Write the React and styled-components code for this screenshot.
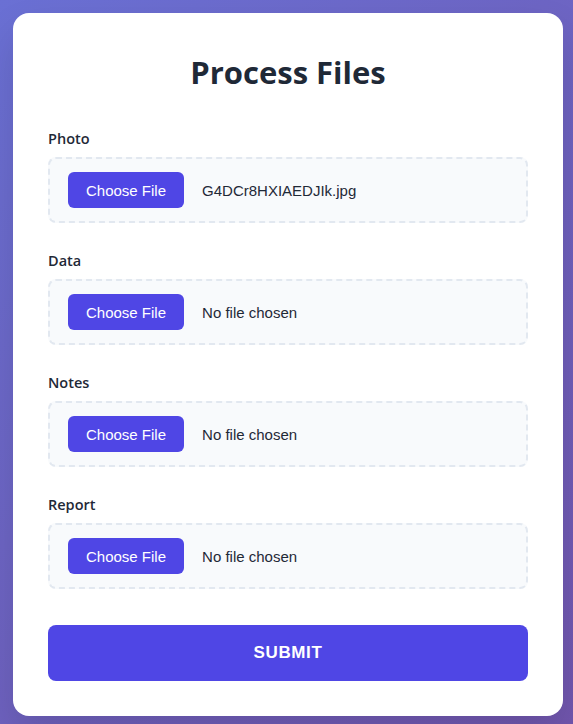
import React from "react";
import styled, { createGlobalStyle } from "styled-components";

const GlobalStyle = createGlobalStyle`
  * { box-sizing: border-box; }
  html, body { margin: 0; padding: 0; }
  body {
    min-height: 100vh;
    background: linear-gradient(135deg, #6a70d4 0%, #7156ae 100%);
    font-family: "Open Sans", "Noto Sans", sans-serif;
  }
`;

const Page = styled.div`
  padding: 13px 10px 8px 13px;
`;

const Card = styled.div`
  background: #ffffff;
  border-radius: 16px;
  padding: 35px;
  box-shadow: 0 20px 40px rgba(0, 0, 0, 0.12);
`;

const Title = styled.h1`
  margin: 4px 0 37px;
  text-align: center;
  font-family: "Open Sans", "Noto Sans", sans-serif;
  font-size: 31px;
  line-height: 40px;
  font-weight: 700;
  color: #1f2937;
`;

const Form = styled.form`
  display: flex;
  flex-direction: column;
`;

const Field = styled.div`
  margin-bottom: 28px;
`;

const Label = styled.label`
  display: block;
  margin-bottom: 8px;
  font-size: 14.5px;
  line-height: 20px;
  font-weight: 600;
  color: #1f2937;
`;

const DropZone = styled.div`
  display: flex;
  align-items: center;
  gap: 18px;
  padding: 13px 18px;
  border: 2px dashed #e2e8f0;
  border-radius: 8px;
  background: #f8fafc;
`;

const ChooseButton = styled.button`
  height: 36px;
  padding: 0 18px;
  border: none;
  border-radius: 6px;
  background: #4f46e5;
  color: #ffffff;
  font-family: "Liberation Sans", Arial, sans-serif;
  font-size: 15px;
  cursor: pointer;
`;

const FileName = styled.span`
  font-family: "Liberation Sans", Arial, sans-serif;
  font-size: 15px;
  color: #1f2937;
`;

const Submit = styled.button`
  margin-top: 8px;
  height: 56px;
  border: none;
  border-radius: 8px;
  background: #4f46e5;
  color: #ffffff;
  font-family: "Liberation Sans", Arial, sans-serif;
  font-size: 17px;
  font-weight: 700;
  letter-spacing: 0.6px;
  text-transform: uppercase;
  cursor: pointer;
`;

const fields = [
  { label: "Photo", file: "G4DCr8HXIAEDJIk.jpg" },
  { label: "Data", file: "No file chosen" },
  { label: "Notes", file: "No file chosen" },
  { label: "Report", file: "No file chosen" },
];

export default function App() {
  return (
    <>
      <GlobalStyle />
      <Page>
        <Card>
          <Title>Process Files</Title>
          <Form onSubmit={(e) => e.preventDefault()}>
            {fields.map((f) => (
              <Field key={f.label}>
                <Label>{f.label}</Label>
                <DropZone>
                  <ChooseButton type="button">Choose File</ChooseButton>
                  <FileName>{f.file}</FileName>
                </DropZone>
              </Field>
            ))}
            <Submit type="submit">Submit</Submit>
          </Form>
        </Card>
      </Page>
    </>
  );
}
